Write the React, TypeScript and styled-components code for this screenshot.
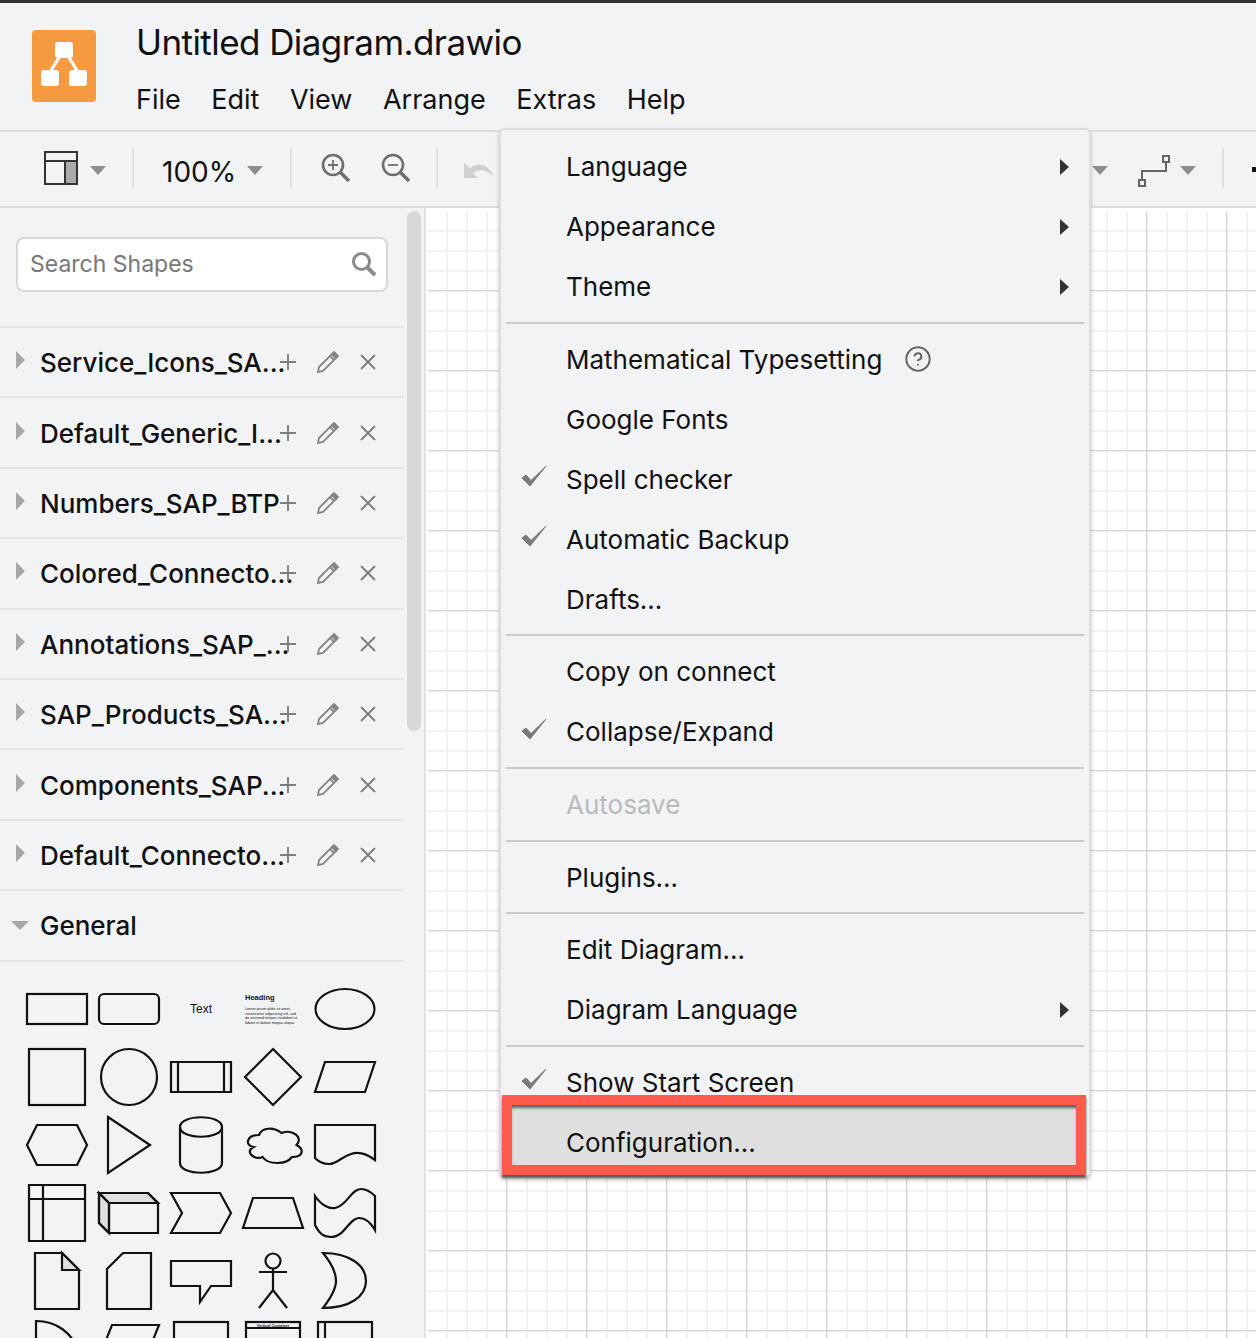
import React from "react";
import styled, { createGlobalStyle } from "styled-components";
import { CircleHelp } from "lucide-react";

const Global = createGlobalStyle`
  html, body { margin: 0; padding: 0; height: 1338px; overflow: hidden; background: #fff; }
  body { font-family: Inter, "Noto Sans", "Liberation Sans", sans-serif; color: #111; }
  #root { width: 1256px; height: 1338px; overflow: hidden; }
  * { box-sizing: border-box; }
`;

const Page = styled.div`
  position: relative;
  width: 1256px;
  height: 1338px;
  display: flex;
  flex-direction: column;
  overflow: hidden;
  border-top: 3px solid #333;
  background: #f1f3f5;
`;
const Header = styled.header`
  height: 129px;
  flex: none;
  display: flex;
  padding: 27px 0 0 32px;
  gap: 40px;
  border-bottom: 2px solid #dddee0;
`;
const LogoBox = styled.svg`
  width: 64px;
  height: 72px;
  flex: none;
`;
const TitleBlock = styled.div`
  display: flex;
  flex-direction: column;
  margin-top: -10px;
`;
const Title = styled.div`
  font-size: 35px;
  line-height: 44px;
  letter-spacing: -0.57px;
`;
const MenuBar = styled.nav`
  display: flex;
  gap: 30.5px;
  margin-top: 18px;
  font-size: 27px;
  line-height: 36px;
`;
const Toolbar = styled.div`
  height: 76px;
  flex: none;
  display: flex;
  align-items: center;
  padding-left: 44px;
  border-bottom: 2px solid #dddee0;
  padding-bottom: 2px;
`;
const Caret = styled.span<{ $gap?: number }>`
  width: 0;
  height: 0;
  flex: none;
  margin-left: ${(p) => p.$gap ?? 0}px;
  margin-top: 5px;
  border-left: 8.5px solid transparent;
  border-right: 8.5px solid transparent;
  border-top: 9px solid #8d8d8d;
`;
const Divider = styled.span<{ $left: number; $right: number }>`
  width: 2px;
  height: 40px;
  flex: none;
  background: #dfe0e2;
  margin: 0 ${(p) => p.$right}px 0 ${(p) => p.$left}px;
`;
const ZoomValue = styled.span`
  font-size: 28px;
  line-height: 36px;
  width: 85px;
  flex: none;
  margin-top: 8px;
`;
const ToolIcon = styled.svg<{ $gap?: number; $drop?: number }>`
  flex: none;
  margin-left: ${(p) => p.$gap ?? 0}px;
  margin-top: ${(p) => p.$drop ?? 0}px;
`;
const ToolRight = styled.div`
  margin-left: auto;
  display: flex;
  align-items: center;
  flex: none;
  margin-right: -12px;
`;
const ToolDot = styled.span`
  width: 16px;
  height: 5px;
  background: #111;
  flex: none;
  margin-left: 28px;
  margin-top: 3px;
`;
const Workspace = styled.div`
  flex: 1;
  display: flex;
  min-height: 0;
`;
const Sidebar = styled.aside`
  position: relative;
  width: 426px;
  flex: none;
  padding: 29px 22px 0 0;
  border-right: 2px solid #dfe0e2;
  overflow: hidden;
`;
const ScrollThumb = styled.div`
  position: absolute;
  left: 407px;
  top: 3px;
  width: 14px;
  height: 520px;
  border-radius: 7px;
  background: #d6d8d9;
`;
const SearchField = styled.div`
  margin-left: 16px;
  width: 372px;
  height: 55px;
  background: #fff;
  border: 2px solid #d7d8da;
  border-radius: 8px;
  display: flex;
  align-items: center;
  justify-content: space-between;
  padding: 0 9px 2px 12px;
  color: #777;
  font-size: 23px;
`;
const Rows = styled.div`
  margin-top: 34px;
  width: 404px;
`;
const Row = styled.div`
  height: 70.4px;
  display: flex;
  align-items: center;
  padding-left: 16px;
  border-top: 2px solid #e4e5e7;
`;
const RowCaret = styled.span`
  width: 0;
  height: 0;
  flex: none;
  margin-right: 15px;
  margin-top: -4px;
  border-top: 9px solid transparent;
  border-bottom: 9px solid transparent;
  border-left: 9px solid #a6a7a8;
`;
const RowCaretOpen = styled.span`
  width: 0;
  height: 0;
  flex: none;
  margin: 0 11px 0 -5px;
  border-left: 9px solid transparent;
  border-right: 9px solid transparent;
  border-top: 9px solid #a6a7a8;
`;
const RowLabel = styled.span`
  width: 239px;
  flex: none;
  white-space: nowrap;
  font-size: 26px;
  font-weight: 500;
  line-height: 32px;
  margin-top: 2px;
`;
const RowActions = styled.span`
  display: flex;
  align-items: center;
  gap: 20px;
  flex: none;
`;
const Palette = styled.div`
  display: grid;
  grid-template-columns: repeat(5, 72px);
  grid-auto-rows: 68px;
  padding: 13px 0 0 21px;
  border-top: 2px solid #e4e5e7;
  width: 404px;
`;
const ShapeSvg = styled.svg`
  display: block;
  fill: none;
  stroke: #111;
  stroke-width: 2.2;
  stroke-linejoin: miter;
`;
const ShapeText = styled.text<{ $size: number; $bold?: boolean }>`
  font-family: "Liberation Sans", Arial, sans-serif;
  font-size: ${(p) => p.$size}px;
  font-weight: ${(p) => (p.$bold ? 700 : 400)};
  fill: #111;
  stroke: none;
`;
const Canvas = styled.main`
  flex: 1;
  border-top: 4px solid #fff;
  border-left: 2px solid #fff;
  background-color: #fff;
  background-clip: padding-box;
  background-image:
    linear-gradient(to right, #d2d2d2 1px, transparent 1px),
    linear-gradient(to bottom, #d2d2d2 1px, transparent 1px),
    linear-gradient(to right, #f2f2f2 2px, transparent 2px),
    linear-gradient(to bottom, #f2f2f2 2px, transparent 2px);
  background-size: 80px 80px, 80px 80px, 20px 20px, 20px 20px;
  background-position: 78px 0, 0 78px, 18px 0, 0 18px;
`;
const Menu = styled.div`
  position: absolute;
  left: 499px;
  top: 125px;
  width: 592px;
  height: 1050px;
  padding: 6.5px 0 0;
  background: #f1f3f5;
  border: 2px solid #dcdddf;
  border-radius: 6px;
  box-shadow: 0 2px 4px rgba(0, 0, 0, 0.22);
  font-size: 26px;
`;
const ItemRow = styled.div<{ $disabled?: boolean }>`
  position: relative;
  height: 60px;
  display: grid;
  grid-template-columns: 65px 1fr auto;
  align-items: center;
  padding-right: 20px;
  color: ${(p) => (p.$disabled ? "#b9babb" : "#111")};
`;
const CheckSlot = styled.span`
  display: flex;
  padding-left: 20px;
  margin-top: -4px;
`;
const ItemLabel = styled.span`
  display: flex;
  align-items: center;
  gap: 22px;
  white-space: nowrap;
`;
const SubArrow = styled.span`
  width: 0;
  height: 0;
  border-top: 8px solid transparent;
  border-bottom: 8px solid transparent;
  border-left: 9px solid #333;
`;
const Sep = styled.div`
  height: 12.67px;
  display: flex;
  align-items: center;
  padding: 0 5px;
  &::before {
    content: "";
    flex: 1;
    height: 2px;
    background: #cacbcd;
  }
`;
const Annotation = styled.div`
  position: absolute;
  left: 1px;
  top: -17px;
  width: 584px;
  height: 80px;
  display: flex;
  align-items: center;
  padding-left: 54px;
  padding-top: 14px;
  background: #dfdfdf;
  border: 10px solid #fe5a4e;
  box-shadow: 0 3px 2px rgba(40, 40, 40, 0.75), inset 0 4px 3px -1px rgba(40, 40, 40, 0.7);
`;

const Check = () => (
  <svg width="26" height="24" viewBox="0 0 26 24">
    <path d="M1 13 L9 21 L25 1 L10 15.5 L5 10 Z" fill="#7a7a7a" stroke="#7a7a7a" strokeWidth="1" strokeLinejoin="round" />
  </svg>
);

const Logo = () => (
  <LogoBox viewBox="0 0 64 72">
    <rect width="64" height="72" rx="4" fill="#f59a40" />
    <path d="M28 26 L18 42 M36 26 L46 42" stroke="#fff" strokeWidth="3.2" />
    <rect x="23" y="12" width="18" height="16" rx="3" fill="#fff" />
    <rect x="9" y="40" width="18" height="16" rx="3" fill="#fff" />
    <rect x="37" y="40" width="18" height="16" rx="3" fill="#fff" />
  </LogoBox>
);

const LayoutIcon = () => (
  <ToolIcon width="34" height="34" viewBox="0 0 34 34">
    <rect x="21" y="10" width="12" height="23" fill="#aaa" />
    <path d="M1 1 H33 V33 H1 Z M1 10 H33 M21 10 V33" fill="none" stroke="#333" strokeWidth="2" />
  </ToolIcon>
);

const ZoomIcon = ({ plus, gap }: { plus?: boolean; gap: number }) => (
  <ToolIcon $gap={gap} width="30" height="30" viewBox="0 0 30 30" fill="none" stroke="#6e6e6e">
    <circle cx="12" cy="12" r="10" strokeWidth="2.6" />
    <path d="M19 19 L28 28" strokeWidth="3.4" />
    <path d={plus ? "M7 12 H17 M12 7 V17" : "M7 12 H17"} strokeWidth="1.8" />
  </ToolIcon>
);

const UndoIcon = () => (
  <ToolIcon $gap={26} $drop={2} width="30" height="22" viewBox="0 0 30 22">
    <path d="M0 5 V20 H14 L9 15 C14 11 22 11 30 19 C25 7 15 3 6 10 Z" fill="#cfd0d1" />
  </ToolIcon>
);

const ConnectorIcon = () => (
  <ToolIcon $drop={6} width="32" height="34" viewBox="0 0 32 34" fill="none" stroke="#666" strokeWidth="2">
    <path d="M4 26 V17 H28 V8" />
    <rect x="25" y="2" width="6" height="6" />
    <rect x="1" y="26" width="6" height="6" />
  </ToolIcon>
);

const SearchIcon = () => (
  <svg width="26" height="26" viewBox="0 0 26 26" fill="none" stroke="#8a8a8a">
    <circle cx="10.5" cy="10.5" r="8" strokeWidth="3" />
    <path d="M16 16 L24 24" strokeWidth="4" />
  </svg>
);

const PlusGlyph = () => (
  <svg width="18" height="18" viewBox="0 0 18 18" stroke="#7c7c7c" strokeWidth="1.8">
    <path d="M9 1 V17 M1 9 H17" />
  </svg>
);
const PencilGlyph = () => (
  <svg width="24" height="24" viewBox="0 0 24 24" fill="none" stroke="#858585" strokeWidth="1.8" style={{ marginLeft: -1 }}>
    <path d="M3 17 L16 4 L20 8 L7 21 L2 22 Z M14 6 L18 10" />
    <path d="M18 2 L22 6 L20 8 L16 4 Z" fill="#858585" />
  </svg>
);
const CloseGlyph = () => (
  <svg width="18" height="18" viewBox="0 0 18 18" stroke="#7c7c7c" strokeWidth="1.8" style={{ marginLeft: -1 }}>
    <path d="M2 2 L16 16 M16 2 L2 16" />
  </svg>
);

const libraries = [
  "Service_Icons_SA...",
  "Default_Generic_I...",
  "Numbers_SAP_BTP",
  "Colored_Connecto...",
  "Annotations_SAP_...",
  "SAP_Products_SA...",
  "Components_SAP...",
  "Default_Connecto...",
];

const LIGHT = "#dfe0e2";

const shapes: React.ReactNode[] = [
  <rect x="6" y="19" width="60" height="30" />,
  <rect x="6" y="19" width="60" height="30" rx="5" />,
  <ShapeText $size={12} x="36" y="38" textAnchor="middle">Text</ShapeText>,
  <>
    <ShapeText $size={7.5} $bold x="8" y="25">Heading</ShapeText>
    <ShapeText $size={3.7} x="8" y="35">Lorem ipsum dolor sit amet,</ShapeText>
    <ShapeText $size={3.7} x="8" y="39.5">consectetur adipisicing elit, sed</ShapeText>
    <ShapeText $size={3.7} x="8" y="44">do eiusmod tempor incididunt ut</ShapeText>
    <ShapeText $size={3.7} x="8" y="48.5">labore et dolore magna aliqua.</ShapeText>
  </>,
  <ellipse cx="36" cy="34" rx="29.5" ry="20" />,

  <rect x="8" y="6" width="56" height="56" />,
  <circle cx="36" cy="34" r="28" />,
  <path d="M6 19 H66 V49 H6 Z M13 19 V49 M59 19 V49" />,
  <path d="M36 6 L64 34 L36 62 L8 34 Z" />,
  <path d="M16 19 H66 L56 49 H6 Z" />,

  <path d="M16 14 H56 L66 34 L56 54 H16 L6 34 Z" />,
  <path d="M15 6 L57 34 L15 62 Z" />,
  <path d="M15 16 C15 3 57 3 57 16 V52 C57 65 15 65 15 52 Z M15 16 C15 29 57 29 57 16" />,
  <path d="M22 24 C10 24 7 34 16.6 36 C7 40.4 17.8 50 25.6 46 C31 54 49 54 55 46 C67 46 67 38 59.5 34 C67 26 55 18 44.5 22 C37 16 25 16 22 24 Z" />,
  <path d="M6 14 H66 V49 C58 43 50 40 42 43 C32 46 28 53 20 53 C14 53 10 51 6 47 Z" />,

  <path d="M8 6 H64 V62 H8 Z M22 6 V62 M8 20 H64" />,
  <>
    <path d="M6 14 H55 L65 24 H16 Z M6 14 L16 24 V54 L6 44 Z" fill={LIGHT} />
    <path d="M6 14 H55 L65 24 V54 H16 L6 44 Z M16 24 H65 M16 24 V54 M6 14 L16 24" />
  </>,
  <path d="M6 14 H55 L66 34 L55 54 H6 L17 34 Z" />,
  <path d="M16 19 H56 L66 49 H6 Z" />,
  <path d="M6 17 C12 26 20 30 26 29 C38 27 42 10 52 10 C58 10 62 13 66 17 V51 C62 44 56 39 50 39 C40 39 36 58 22 58 C14 58 10 54 6 46 Z" />,

  <>
    <path d="M14 6 H41 L58 23 V62 H14 Z" />
    <path d="M41 6 V23 H58 Z" fill={LIGHT} />
  </>,
  <path d="M30 6 H58 V62 H14 V22 Z" />,
  <path d="M6 14 H66 V39 H46 L35 55 V39 H6 Z" />,
  <>
    <circle cx="36" cy="14" r="7.5" />
    <path d="M36 21.5 V43 M22 25 H50 M22 61 L36 43 L50 61" />
  </>,
  <path d="M14 6 C40 6 57 18 57 34 C57 50 40 61 14 61 C24 48 27 40 27 34 C27 26 24 18 14 6 Z" />,

  <path d="M15 6 C36 6 50 18 57 34 V66 H15 Z" />,
  <path d="M19 10 H66 L50 50 H3 Z" />,
  <rect x="9" y="7" width="54" height="60" />,
  <>
    <rect x="9" y="7" width="54" height="60" />
    <path d="M9 13 H63" />
    <ShapeText $size={3.8} $bold x="36" y="12" textAnchor="middle">Vertical Container</ShapeText>
  </>,
  <>
    <rect x="9" y="7" width="54" height="60" />
    <path d="M16 7 V67" />
  </>,
];

type Item = { label: string; check?: boolean; sub?: boolean; help?: boolean; disabled?: boolean };
const groups: Item[][] = [
  [{ label: "Language", sub: true }, { label: "Appearance", sub: true }, { label: "Theme", sub: true }],
  [
    { label: "Mathematical Typesetting", help: true },
    { label: "Google Fonts" },
    { label: "Spell checker", check: true },
    { label: "Automatic Backup", check: true },
    { label: "Drafts..." },
  ],
  [{ label: "Copy on connect" }, { label: "Collapse/Expand", check: true }],
  [{ label: "Autosave", disabled: true }],
  [{ label: "Plugins..." }],
  [{ label: "Edit Diagram..." }, { label: "Diagram Language", sub: true }],
  [{ label: "Show Start Screen", check: true }],
];

export default function App() {
  return (
    <>
      <Global />
      <Page>
        <Header>
          <Logo />
          <TitleBlock>
            <Title>Untitled Diagram.drawio</Title>
            <MenuBar>
              {["File", "Edit", "View", "Arrange", "Extras", "Help"].map((m) => (
                <span key={m}>{m}</span>
              ))}
            </MenuBar>
          </TitleBlock>
        </Header>
        <Toolbar>
          <LayoutIcon />
          <Caret $gap={12} />
          <Divider $left={26} $right={28} />
          <ZoomValue>100%</ZoomValue>
          <Caret />
          <Divider $left={27} $right={29} />
          <ZoomIcon plus gap={0} />
          <ZoomIcon gap={30} />
          <Divider $left={25} $right={0} />
          <UndoIcon />
          <ToolRight>
            <Caret />
            <ToolIcon as="span" $gap={30} />
            <ConnectorIcon />
            <Caret $gap={10} />
            <Divider $left={26} $right={0} />
            <ToolDot />
          </ToolRight>
        </Toolbar>
        <Workspace>
          <Sidebar>
            <ScrollThumb />
            <SearchField>
              <span>Search Shapes</span>
              <SearchIcon />
            </SearchField>
            <Rows>
              {libraries.map((l) => (
                <Row key={l}>
                  <RowCaret />
                  <RowLabel>{l}</RowLabel>
                  <RowActions>
                    <PlusGlyph />
                    <PencilGlyph />
                    <CloseGlyph />
                  </RowActions>
                </Row>
              ))}
              <Row>
                <RowCaretOpen />
                <RowLabel>General</RowLabel>
              </Row>
              <Palette>
                {shapes.map((s, i) => (
                  <ShapeSvg key={i} width="72" height="68" viewBox="0 0 72 68">
                    {s}
                  </ShapeSvg>
                ))}
              </Palette>
            </Rows>
          </Sidebar>
          <Canvas />
        </Workspace>
        <Menu>
          {groups.map((g, gi) => (
            <React.Fragment key={gi}>
              {gi > 0 && <Sep />}
              {g.map((it) => (
                <ItemRow key={it.label} $disabled={it.disabled}>
                  <CheckSlot>{it.check && <Check />}</CheckSlot>
                  <ItemLabel>
                    {it.label}
                    {it.help && <CircleHelp size={28} color="#666" strokeWidth={1.7} />}
                  </ItemLabel>
                  {it.sub ? <SubArrow /> : <span />}
                </ItemRow>
              ))}
            </React.Fragment>
          ))}
          <ItemRow>
            <Annotation>Configuration...</Annotation>
          </ItemRow>
        </Menu>
      </Page>
    </>
  );
}
